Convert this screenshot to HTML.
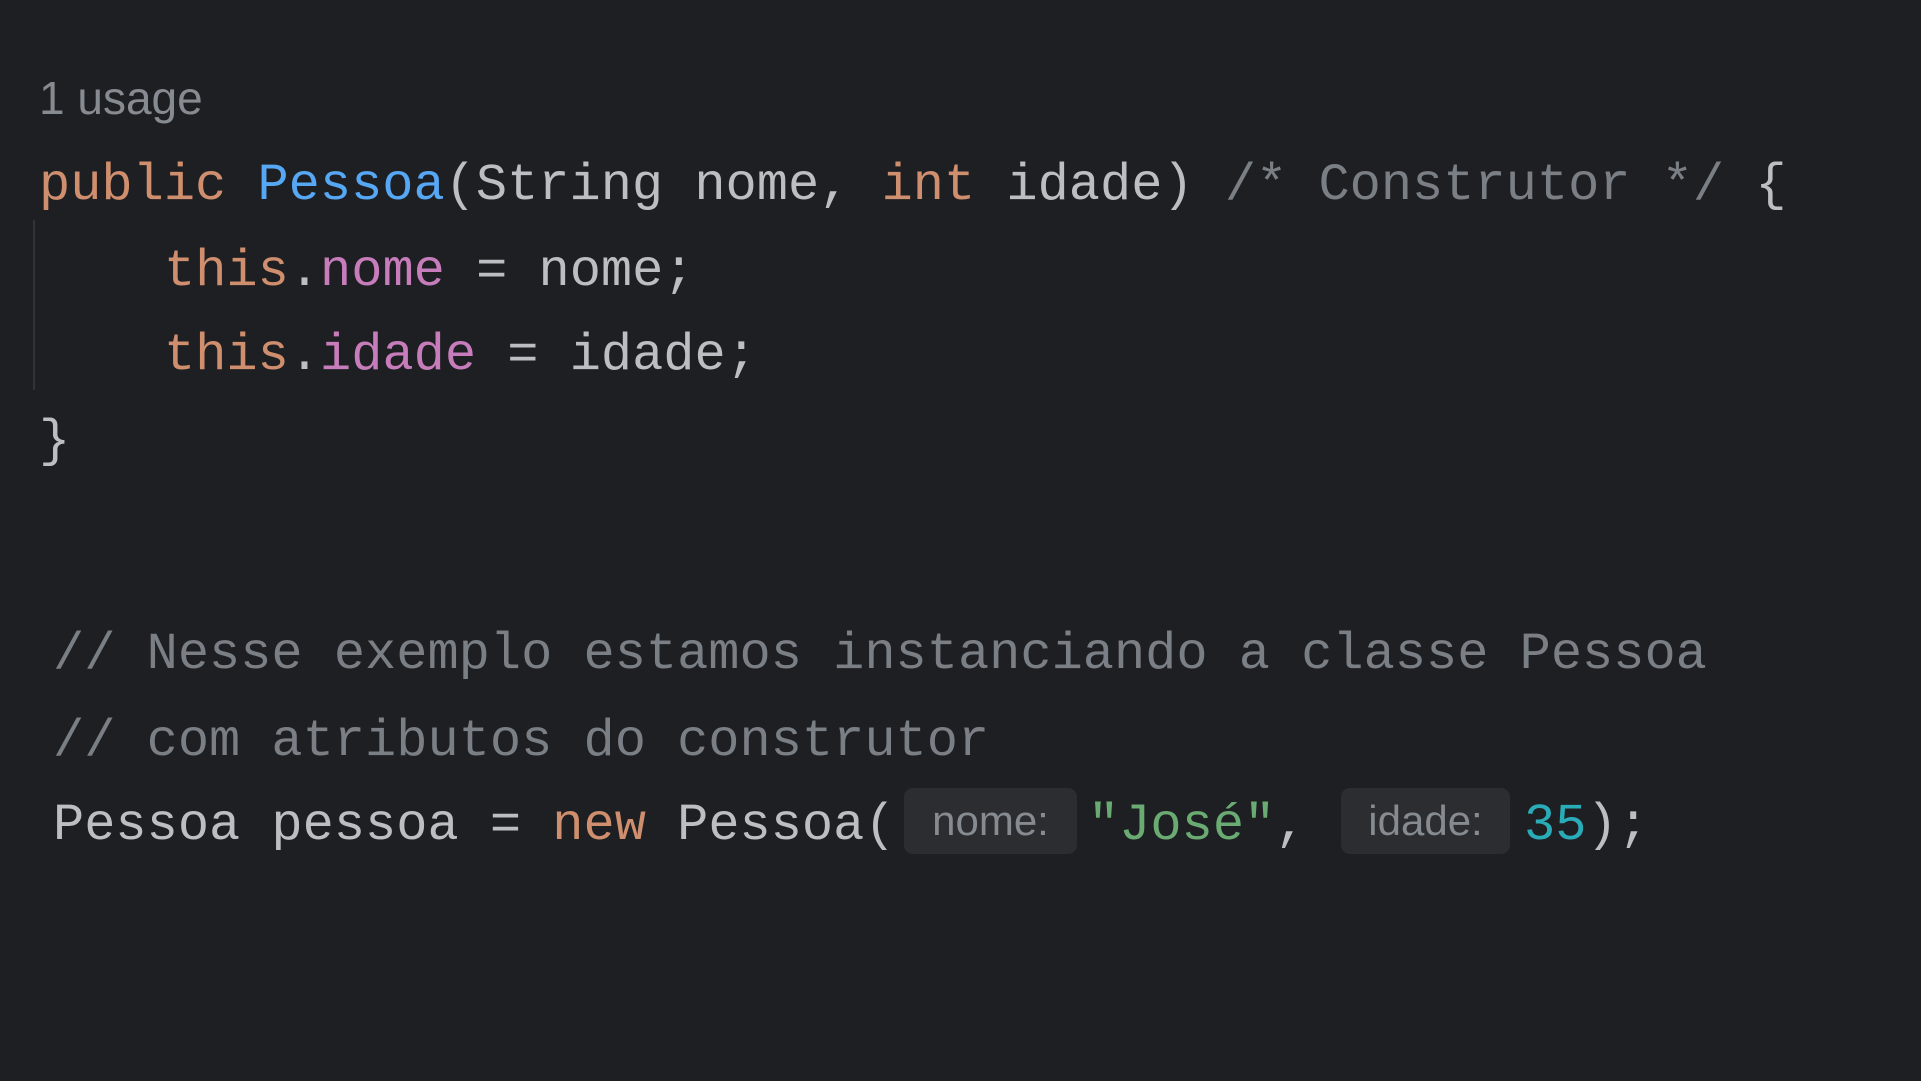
<!DOCTYPE html>
<html><head><meta charset="utf-8"><style>
html,body{margin:0;padding:0}
body{width:1921px;height:1081px;background:#1e1f22;position:relative;overflow:hidden}
.l{position:absolute;white-space:pre;font-family:"Liberation Mono",monospace;font-size:52px;line-height:52px;color:#bcbec4}
.k{color:#cf8e6d}.f{color:#56a8f5}.p{color:#c77dbb}.c{color:#7a7e85}.s{color:#6aab73}.n{color:#2aacb8}
.u{position:absolute;left:39px;top:72px;font-family:"Liberation Sans",sans-serif;font-size:46px;line-height:52px;color:#868a91}
.in{position:absolute;background:#2b2d30;border-radius:9px;color:#868a91;font-family:"Liberation Sans",sans-serif;font-size:42px;line-height:66px;height:66px;text-align:center}
.g{position:absolute;left:33px;top:220px;width:2px;height:170px;background:#313335}
</style></head><body>
<div class="u">1 usage</div>
<div class="l" style="left:39px;top:160px"><span class="k">public</span> <span class="f">Pessoa</span>(String nome, <span class="k">int</span> idade) <span class="c">/* Construtor */</span> {</div>
<div class="g"></div>
<div class="l" style="left:164px;top:246px"><span class="k">this</span>.<span class="p">nome</span> = nome;</div>
<div class="l" style="left:164px;top:330px"><span class="k">this</span>.<span class="p">idade</span> = idade;</div>
<div class="l" style="left:39px;top:416px">}</div>
<div class="l c" style="left:53px;top:629px">// Nesse exemplo estamos instanciando a classe Pessoa</div>
<div class="l c" style="left:53px;top:716px">// com atributos do construtor</div>
<div class="l" style="left:53px;top:800px">Pessoa pessoa = <span class="k">new</span> Pessoa(</div>
<div class="in" style="left:904px;top:788px;width:173px">nome:</div>
<div class="l" style="left:1088px;top:800px"><span class="s">"José"</span>,</div>
<div class="in" style="left:1341px;top:788px;width:169px">idade:</div>
<div class="l" style="left:1524px;top:800px"><span class="n">35</span>);</div>
</body></html>
